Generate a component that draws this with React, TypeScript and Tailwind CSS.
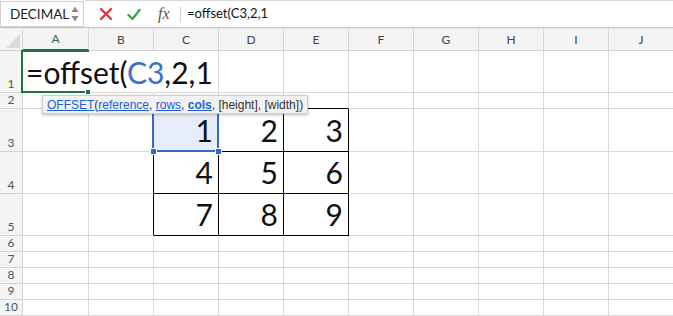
import React from "react";

const cols = ["A", "B", "C", "D", "E", "F", "G", "H", "I", "J"];
const rowHeights = [42, 16, 43, 42, 42, 16, 16, 16, 16, 16];

const table: Record<string, string> = {
  "3C": "1", "3D": "2", "3E": "3",
  "4C": "4", "4D": "5", "4E": "6",
  "5C": "7", "5D": "8", "5E": "9",
};

function cellBorder(r: number, c: string) {
  const inTable = r >= 3 && r <= 5 && ["C", "D", "E"].includes(c);
  const rightBlack = (r >= 3 && r <= 5 && c === "B") || inTable;
  const bottomBlack = (r === 2 && ["C", "D", "E"].includes(c)) || inTable;
  let cls = "";
  if (r === 1 && (c === "A" || c === "B")) cls += " border-r-transparent";
  else cls += rightBlack ? " border-r-black" : " border-r-[#d9d9d9]";
  cls += bottomBlack ? " border-b-black" : " border-b-[#d9d9d9]";
  return cls;
}

export default function App() {
  return (
    <div className="w-[673px] h-[316px] bg-white overflow-hidden relative font-['Lato',sans-serif]">
      {/* formula bar */}
      <div className="flex h-[28px] bg-[#fbfbfb] border-b border-[#c8c8c8]">
        <div className="w-[84px] shrink-0 h-[26px] mt-[1px] flex items-center justify-between pl-[9px] pr-[3px] bg-white border border-[#d0d0d0] text-[13.5px] text-[#222]">
          <span>DECIMAL</span>
          <svg className="shrink-0" width="10" height="20" viewBox="0 0 10 20">
            <path d="M5 2.5 L8.5 8 L1.5 8 Z" fill="#8a8a8a" />
            <path d="M5 17.5 L8.5 12 L1.5 12 Z" fill="#8a8a8a" />
          </svg>
        </div>
        <div className="flex items-center flex-1 border-t border-[#d8d8d8] bg-white ml-[1px]">
          <div className="w-[95px] flex items-center">
            <svg className="ml-[14px]" width="14" height="14" viewBox="0 0 14 14">
              <path d="M2 2 L12 12 M12 2 L2 12" stroke="#e2353b" strokeWidth="2.4" strokeLinecap="round" />
            </svg>
            <svg className="ml-[14px]" width="14" height="13" viewBox="0 0 14 13">
              <path d="M1.5 7 L5.5 11 L12.5 2" fill="none" stroke="#3aa64b" strokeWidth="2.4" strokeLinecap="round" strokeLinejoin="round" />
            </svg>
            <span className="ml-[17px] text-[16px] italic text-[#555] font-['Liberation_Serif',serif]">fx</span>
          </div>
          <div className="h-[16px] w-px bg-[#d4d4d4]" />
          <span className="ml-[6px] text-[13px] text-[#111]">=offset(C3,2,1</span>
        </div>
      </div>
      <div className="h-[1px] bg-[#e8e8e8]" />

      {/* sheet */}
      <div className="flex flex-col">
        <div className="flex h-[22px]">
          <div className="w-[23px] shrink-0 bg-[#f4f4f4] border-r border-b border-[#d4d4d4] relative overflow-hidden">
            <svg className="absolute right-[2px] bottom-[2px]" width="14" height="14" viewBox="0 0 14 14">
              <path d="M14 0 L14 14 L0 14 Z" fill="#dcdcdc" />
            </svg>
          </div>
          {cols.map((c) => (
            <div
              key={c}
              className={
                "shrink-0 flex items-center justify-center bg-[#f4f4f4] border-r border-[#d4d4d4] text-[12px] " +
                (c === "A"
                  ? "w-[66px] border-b-2 border-b-[#1e7145] text-[#1e7145]"
                  : "w-[65px] border-b text-[#444]")
              }
            >
              {c}
            </div>
          ))}
        </div>

        {rowHeights.map((h, i) => {
          const r = i + 1;
          return (
            <div key={r} className="flex" style={{ height: h }}>
              <div
                className={
                  "w-[23px] shrink-0 flex items-end justify-center pb-[1px] bg-[#f4f4f4] border-r border-b border-[#d4d4d4] text-[12px] leading-[14px] " +
                  (r === 1 ? "text-[#1e7145]" : "text-[#555]")
                }
              >
                {r}
              </div>
              {cols.map((c) => {
                const v = table[`${r}${c}`];
                const sel = r === 3 && c === "C";
                return (
                  <div
                    key={c}
                    className={
                      "shrink-0 relative border-r border-b flex items-end justify-end " +
                      (c === "A" ? "w-[66px]" : "w-[65px]") +
                      cellBorder(r, c) +
                      (sel ? " bg-[#e7edf8]" : "")
                    }
                  >
                    {r === 1 && c === "A" && (
                      <>
                        <div className="absolute -left-[2px] -top-[1px] -right-[1px] -bottom-[1px] border-2 border-r-0 border-[#1e7145] z-20" />
                        <div className="absolute -right-[3px] -bottom-[3px] w-[6px] h-[6px] bg-[#1e7145] border border-white z-20" />
                        <span className="absolute left-[3px] bottom-[3px] z-30 whitespace-nowrap text-[30px] leading-[34px] text-[#111]">
                          =offset(<span className="text-[#3b6fcf]">C3</span>,2,1
                        </span>
                      </>
                    )}
                    {v && (
                      <span className="pr-[5px] pb-[4px] text-[30px] leading-[34px] text-[#111]">{v}</span>
                    )}
                    {sel && (
                      <>
                        <div className="absolute -left-[2px] -top-[1px] -right-[1px] -bottom-[1px] border-2 border-[#3467cf] z-20" />
                        <div className="absolute -left-[4px] -bottom-[4px] w-[7px] h-[7px] bg-[#3467cf] border border-white z-20" />
                        <div className="absolute -right-[4px] -bottom-[4px] w-[7px] h-[7px] bg-[#3467cf] border border-white z-20" />
                      </>
                    )}
                  </div>
                );
              })}
            </div>
          );
        })}
      </div>

      {/* function tooltip */}
      <div className="absolute left-[42px] top-[95px] z-40 h-[19px] px-[4px] flex items-center bg-[#f2f2f2] border border-[#cfcfcf] shadow-[0_1px_3px_rgba(0,0,0,0.25)] text-[12px] text-[#333] whitespace-nowrap font-['Liberation_Sans',sans-serif]">
        <span className="text-[#1a5fd6] underline">OFFSET</span>(
        <span className="text-[#1a5fd6] underline">reference</span>,&nbsp;
        <span className="text-[#1a5fd6] underline">rows</span>,&nbsp;
        <span className="text-[#1a5fd6] underline font-bold">cols</span>, [height], [width])
      </div>
    </div>
  );
}
